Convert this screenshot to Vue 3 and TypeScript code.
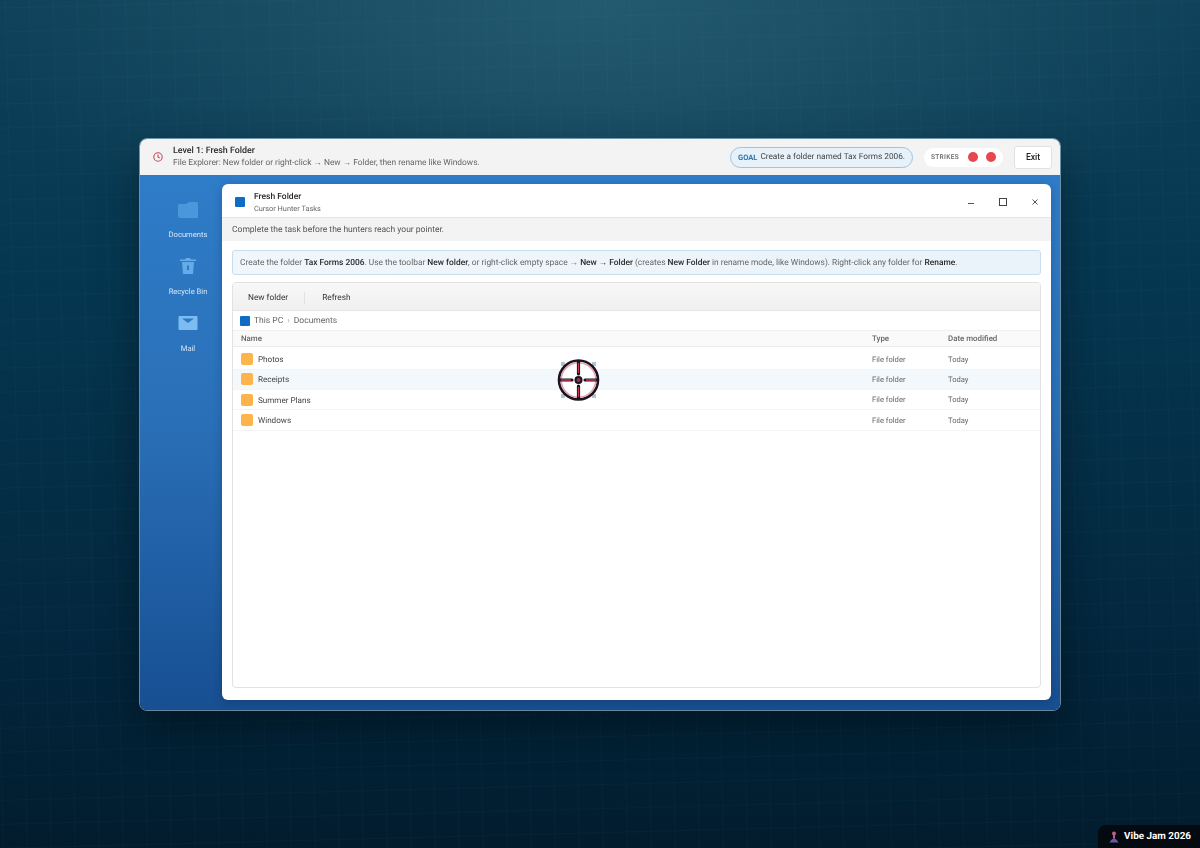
<template>
  <div class="stage">
    <div class="game-window">
      <header class="hud">
        <svg class="hud-clock" width="12" height="12" viewBox="0 0 12 12" fill="none" stroke="#c8484f" stroke-width="1.1">
          <circle cx="6" cy="6" r="4.200" />
          <path d="M6 3.400V6l1.700 1" />
        </svg>
        <div class="hud-text">
          <div class="hud-title">Level 1: Fresh Folder</div>
          <div class="hud-sub">File Explorer: New folder or right-click → New → Folder, then rename like Windows.</div>
        </div>
        <div class="goal"><span class="goal-tag">GOAL</span> Create a folder named Tax Forms 2006.</div>
        <div class="strikes">
          <span class="strikes-label">STRIKES</span>
          <span class="dot"></span>
          <span class="dot"></span>
        </div>
        <button class="exit">Exit</button>
      </header>

      <div class="desktop">
        <aside class="side">
          <div class="side-item">
            <svg width="24" height="20" viewBox="0 0 24 20" fill="#4c96dc">
              <path d="M2 6.500c0-1 .700-1.500 1.500-1.500H10l3-2h7.500c1 0 1.500.700 1.500 1.500v13c0 1-.700 1.500-1.500 1.500h-17C2.700 18 2 17.500 2 16.500z" />
            </svg>
            <span>Documents</span>
          </div>
          <div class="side-item">
            <svg width="24" height="20" viewBox="0 0 24 20" fill="#64abe9">
              <path d="M10 2h4l1 1.500h5v1.500H4V3.500h5z" />
              <path d="M6 6h12l-1 12H7zM11 9.500v4.500h2V9.500z" fill-rule="evenodd" />
            </svg>
            <span>Recycle Bin</span>
          </div>
          <div class="side-item">
            <svg width="24" height="20" viewBox="0 0 24 20">
              <rect x="2.500" y="3" width="19" height="14" rx="1" fill="#7dbcf2" />
              <path d="M6 5.500h12l-6 4.500z" fill="#2f78c4" />
            </svg>
            <span>Mail</span>
          </div>
        </aside>

        <section class="task-window">
          <div class="titlebar">
            <span class="app-icon"></span>
            <div class="title-text">
              <div class="app-title">Fresh Folder</div>
              <div class="app-sub">Cursor Hunter Tasks</div>
            </div>
            <div class="controls">
              <svg width="10" height="10" viewBox="0 0 10 10"><path d="M2 6.500h6" stroke="#555" stroke-width="1" /></svg>
              <svg width="10" height="10" viewBox="0 0 10 10" fill="none"><rect x="1.500" y="1.500" width="7" height="7" stroke="#444" /></svg>
              <svg width="10" height="10" viewBox="0 0 10 10"><path d="M2.500 2.500l5 5M7.500 2.500l-5 5" stroke="#555" /></svg>
            </div>
          </div>
          <div class="status">Complete the task before the hunters reach your pointer.</div>
          <div class="body">
            <p class="callout">
              Create the folder <b>Tax Forms 2006</b>. Use the toolbar <b>New folder</b>, or right-click empty space → <b>New → Folder</b> (creates <b>New Folder</b> in rename mode, like Windows). Right-click any folder for <b>Rename</b>.
            </p>
            <div class="explorer">
              <div class="toolbar">
                <button class="tool">New folder</button>
                <span class="tool-sep"></span>
                <button class="tool">Refresh</button>
              </div>
              <div class="crumbs">
                <span class="crumb-icon"></span>
                <span>This PC</span>
                <span class="crumb-sep">›</span>
                <span>Documents</span>
              </div>
              <div class="row head">
                <span>Name</span>
                <span>Type</span>
                <span>Date modified</span>
              </div>
              <div class="files">
                <div v-for="(name, i) in folders" :key="name" class="row file" :class="{ hover: i === 1 }">
                  <span class="file-name"><i class="folder"></i>{{ name }}</span>
                  <span>File folder</span>
                  <span>Today</span>
                </div>
              </div>
            </div>
          </div>
        </section>
      </div>
    </div>

    <svg class="hunter" width="46" height="46" viewBox="0 0 46 46">
      <g fill="#b4c4cc">
        <rect x="6" y="5" width="4" height="4" />
        <rect x="37" y="5" width="4" height="4" />
        <rect x="6" y="37" width="4" height="4" />
        <rect x="37" y="37" width="4" height="4" />
      </g>
      <circle cx="23.500" cy="23" r="19.500" fill="#fff" stroke="#1a1420" stroke-width="2.600" />
      <circle cx="23.500" cy="23" r="17.300" fill="none" stroke="#eba0ac" stroke-width="1.600" />
      <g stroke="#1a1420" stroke-width="3.200" stroke-linecap="round">
        <path d="M23.500 5v12M23.500 29v12M5 23h12M30 23h12" />
      </g>
      <g stroke="#c8364e" stroke-width="1.300">
        <path d="M23.500 6v10M23.500 30v10M6 23h10M31 23h10" />
      </g>
      <circle cx="23.500" cy="23" r="3" fill="#a03048" stroke="#1a1420" stroke-width="2" />
    </svg>

    <div class="jam">
      <svg width="10" height="12" viewBox="0 0 10 12">
        <path d="M0.500 11.500Q5 3.500 9.500 11.500z" fill="#6f55a8" />
        <path d="M4 3.500h2v4H4z" fill="#a06aa8" />
        <circle cx="5" cy="2.500" r="2" fill="#c85a80" />
      </svg>
      Vibe Jam 2026
    </div>
  </div>
</template>

<script setup lang="ts">
const folders: string[] = ['Photos', 'Receipts', 'Summer Plans', 'Windows'];
</script>

<style>
body {
  margin: 0;
  background: #03283c;
}
</style>

<style scoped>
.stage {
  position: relative;
  width: 100%;
  height: 848px;
  overflow: hidden;
  display: flex;
  align-items: center;
  justify-content: center;
  font-family: Roboto, "Open Sans", sans-serif;
  text-rendering: geometricPrecision;
  color: #2b2b2b;
  background:
    radial-gradient(ellipse 640px 300px at 50% 0, #245a70 0%, rgba(36, 90, 112, 0) 100%),
    linear-gradient(180deg, #0e4159 0%, #053650 35%, #03283f 72%, #021c2e 100%);
}
/* faint tilted grid behind the window */
.stage::before {
  content: "";
  position: absolute;
  inset: -80px;
  transform: rotate(-1.500deg);
  background:
    linear-gradient(rgba(120, 190, 220, 0.03) 1px, transparent 1px) 0 0 / 24px 24px,
    linear-gradient(90deg, rgba(120, 190, 220, 0.03) 1px, transparent 1px) 0 0 / 24px 24px;
}
.game-window {
  position: relative;
  width: 922px;
  height: 573px;
  box-sizing: border-box;
  display: flex;
  flex-direction: column;
  border: 1px solid rgba(190, 215, 235, 0.55);
  border-radius: 8px;
  overflow: hidden;
  box-shadow: 0 16px 40px rgba(0, 0, 0, 0.35);
  will-change: transform;
}
.hud {
  height: 36px;
  flex: none;
  display: flex;
  align-items: center;
  padding: 0 8px 0 12px;
  background: #f3f3f3;
}
.hud-clock { margin-right: 9px; }
.hud-text { flex: 1; }
.hud-title {
  font-size: 8.900px;
  line-height: 13px;
  font-weight: 500;
  color: #2a2a2a;
}
.hud-sub {
  font-size: 8.400px;
  line-height: 11px;
  color: #666;
}
.goal {
  height: 19px;
  display: flex;
  align-items: center;
  gap: 3px;
  padding: 0 7px;
  border: 1px solid #9cc4e4;
  border-radius: 11px;
  background: #e6f1fa;
  font-size: 8.250px;
  color: #444;
}
.goal-tag {
  font-size: 7.500px;
  font-weight: 700;
  color: #2f74ab;
}
.strikes {
  height: 19px;
  margin-left: 11px;
  display: flex;
  align-items: center;
  gap: 8px;
  padding: 0 7px;
  border-radius: 11px;
  background: #fff;
}
.strikes-label {
  margin-right: 1px;
  font-size: 6.600px;
  font-weight: 500;
  letter-spacing: 0.3px;
  color: #666;
}
.dot {
  width: 10px;
  height: 10px;
  border-radius: 50%;
  background: #e8474f;
}
.exit {
  width: 38px;
  height: 23px;
  margin-left: 11px;
  padding: 0;
  border: 1px solid #e2e2e2;
  border-radius: 3px;
  background: #fff;
  font: 500 8.600px Roboto, sans-serif;
  color: #222;
}
.desktop {
  flex: 1;
  min-height: 0;
  display: flex;
  padding: 9px 9px 10px 0;
  background: linear-gradient(180deg, #2f7cc8 0%, #2a70b8 45%, #174f92 100%);
}
.side {
  width: 82px;
  flex: none;
  display: flex;
  flex-direction: column;
  gap: 15px;
  padding: 15px 0 0 14px;
  box-sizing: border-box;
  align-items: center;
}
.side-item {
  display: flex;
  flex-direction: column;
  align-items: center;
  gap: 10px;
  font-size: 7.600px;
  line-height: 12px;
  color: #d6e7f7;
}
.task-window {
  flex: 1;
  min-width: 0;
  display: flex;
  flex-direction: column;
  border-radius: 6px;
  overflow: hidden;
  background: #fff;
  box-shadow: 0 2px 10px rgba(0, 0, 0, 0.2);
}
.titlebar {
  height: 34px;
  flex: none;
  display: flex;
  align-items: center;
  padding: 0 11px 0 13px;
  border-bottom: 1px solid #e5e5e5;
  box-sizing: border-box;
}
.app-icon {
  width: 10px;
  height: 10px;
  margin: 2px 9px 0 0;
  border-radius: 1px;
  background: #0f6cc4;
}
.title-text {
  flex: 1;
  padding-top: 3px;
}
.app-title {
  font-size: 8.500px;
  line-height: 12px;
  font-weight: 500;
  color: #2a2a2a;
}
.app-sub {
  font-size: 7.350px;
  line-height: 11px;
  color: #666;
}
.controls {
  display: flex;
  gap: 22px;
  margin-top: 2px;
}
.status {
  height: 23px;
  flex: none;
  display: flex;
  align-items: center;
  padding: 1px 10px 0;
  box-sizing: border-box;
  background: #f3f3f3;
  font-size: 8.500px;
  color: #555;
}
.body {
  flex: 1;
  min-height: 0;
  display: flex;
  flex-direction: column;
  gap: 7px;
  padding: 9px 10px 12px;
}
.callout {
  height: 25px;
  flex: none;
  margin: 0;
  display: block;
  padding: 1px 7px 0;
  box-sizing: border-box;
  border: 1px solid #c6deee;
  border-radius: 3px;
  background: linear-gradient(90deg, #f0f6fb, #eaf3fa);
  font-size: 8.400px;
  line-height: 23px;
  color: #666;
  white-space: nowrap;
}
.callout b {
  font-weight: 500;
  color: #2a2a2a;
}
.explorer {
  flex: 1;
  min-height: 0;
  border: 1px solid #e2e2e2;
  border-radius: 4px;
  overflow: hidden;
  font-size: 8.500px;
}
.toolbar {
  height: 28px;
  padding: 3px 5px 0;
  box-sizing: border-box;
  display: flex;
  align-items: center;
  border-bottom: 1px solid #e6e6e6;
  background: linear-gradient(180deg, #f8f8f8, #f0f0f0);
}
.tool {
  padding: 0 10px;
  border: 0;
  background: none;
  font: 8.300px Roboto, sans-serif;
  text-rendering: geometricPrecision;
  color: #333;
}
.tool-sep {
  width: 1px;
  height: 12px;
  margin: 0 7px 0 6px;
  background: #e2e2e2;
}
.crumbs {
  height: 19px;
  padding-top: 1px;
  box-sizing: border-box;
  display: flex;
  align-items: center;
  gap: 4px;
  padding-left: 7px;
  color: #666;
}
.crumb-icon {
  width: 10px;
  height: 10px;
  border-radius: 1px;
  background: #0f6cc4;
}
.crumb-sep { color: #aaa; }
.row {
  display: grid;
  grid-template-columns: 1fr 76px 92px;
  align-items: center;
  padding: 0 0 0 8px;
  border-bottom: 1px solid #f4f4f4;
}
.head {
  height: 17px;
  box-sizing: border-box;
  border-top: 1px solid #f0f0f0;
  border-bottom: 1px solid #ececec;
  background: #fafafa;
  font-weight: 500;
  font-size: 7.900px;
  color: #666;
}
.files { padding-top: 2.500px; }
.file {
  height: 20.300px;
  box-sizing: border-box;
  font-size: 7.600px;
  color: #666;
}
.file.hover { background: #f2f8fc; }
.file-name {
  display: flex;
  align-items: center;
  gap: 5px;
  font-size: 8.100px;
  color: #444;
}
.folder {
  width: 12px;
  height: 12px;
  border-radius: 2px;
  background: #fdb44b;
}
.hunter {
  position: absolute;
  left: 555px;
  top: 357px;
}
.jam {
  position: absolute;
  right: 0;
  bottom: 0;
  display: flex;
  align-items: center;
  gap: 5px;
  height: 23px;
  padding: 0 9px 0 11px;
  border-top-left-radius: 8px;
  background: #050a10;
  font-size: 9.900px;
  font-weight: 700;
  color: #fff;
}
</style>
